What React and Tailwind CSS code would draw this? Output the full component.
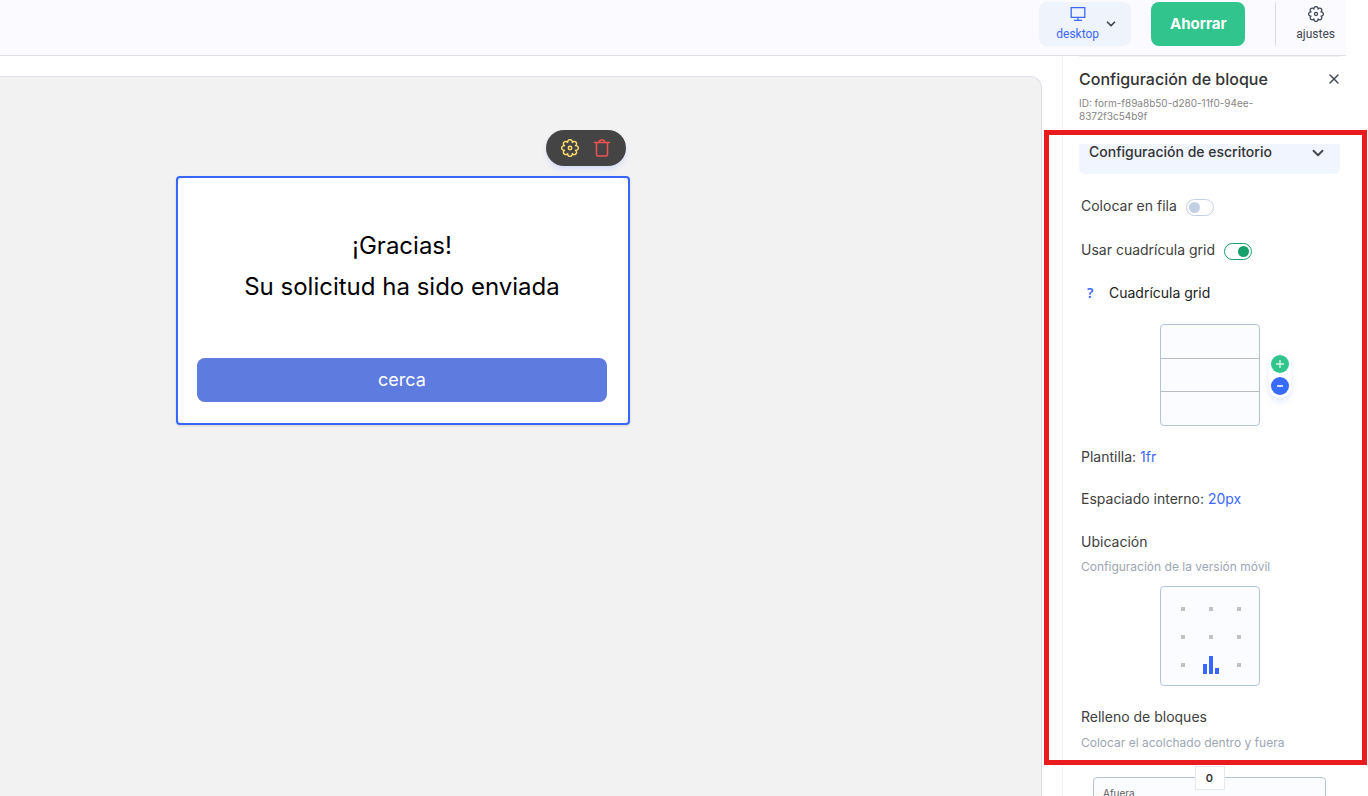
import React, { useState } from "react";
import { ChevronDown, X } from "lucide-react";

const GearIcon = ({ className }) => (
  <svg
    viewBox="0 0 24 24"
    fill="none"
    stroke="currentColor"
    strokeWidth="1.9"
    strokeLinejoin="round"
    className={className}
    aria-hidden="true"
  >
    <path d="M8.94 4.61A3.12 3.12 0 1 1 15.06 4.61A3.12 3.12 0 1 1 19.39 8.94A3.12 3.12 0 1 1 19.39 15.06A3.12 3.12 0 1 1 15.06 19.39A3.12 3.12 0 1 1 8.94 19.39A3.12 3.12 0 1 1 4.61 15.06A3.12 3.12 0 1 1 4.61 8.94A3.12 3.12 0 1 1 8.94 4.61z" />
    <circle cx="12" cy="12" r="2.3" />
  </svg>
);

const DesktopIcon = () => (
  <svg
    viewBox="0 0 16 16"
    fill="none"
    stroke="currentColor"
    strokeWidth="1.3"
    className="size-4"
    aria-hidden="true"
  >
    <path d="M1.2 1.6h13.6v9.8H1.2zM8 11.4v3M4 14.4h8" />
  </svg>
);

const TrashIcon = () => (
  <svg
    viewBox="0 0 18 18"
    fill="none"
    stroke="currentColor"
    strokeWidth="1.5"
    strokeLinecap="round"
    strokeLinejoin="round"
    className="size-[18px]"
    aria-hidden="true"
  >
    <path d="M1.5 3.5h15M3.5 3.5v12q0 1.5 1.5 1.5h8q1.5 0 1.5-1.5v-12M6.2 3.2q.2-2.2 2-2.2h1.6q1.8 0 2 2.2" />
  </svg>
);

const Header = () => {
  return (
    <header className="flex h-14 items-start justify-end border-b border-[#dfdfe8] bg-[#fafaff] pt-[2px] pr-[11px]">
      <button
        type="button"
        className="flex h-11 w-[92px] items-center gap-[5px] rounded-lg bg-[#eff3fb] pl-[17px] font-['Roboto',sans-serif] text-xs text-[#3d67ff]"
      >
        <span className="flex flex-col items-center gap-1">
          <DesktopIcon />
          desktop
        </span>
        <ChevronDown size={14} strokeWidth={3} className="text-[#3f4654]" />
      </button>
      <button
        type="button"
        className="ml-5 h-11 w-[94px] rounded-lg bg-[#31c48d] text-[15px] font-bold text-white"
      >
        Ahorrar
      </button>
      <div className="ml-[30px] flex h-11 border-l border-[#dcdce4] pl-5">
        <button
          type="button"
          className="flex flex-col items-center justify-center gap-1 font-['Roboto',sans-serif] text-xs text-[#3f4654]"
        >
          <GearIcon className="size-4" />
          ajustes
        </button>
      </div>
    </header>
  );
};

const FormBlock = () => {
  return (
    <div className="flex w-[454px] flex-col items-end">
      <div className="mr-1 flex h-9 w-20 items-center justify-center gap-[14px] rounded-full bg-[#444444] shadow-md shadow-indigo-200/60">
        <button type="button" aria-label="Ajustes" className="text-[#ffdc6b]">
          <GearIcon className="size-[18px]" />
        </button>
        <button type="button" aria-label="Eliminar" className="text-[#f05252]">
          <TrashIcon />
        </button>
      </div>
      <div className="mt-[10px] w-full rounded border-2 border-[#3867ff] bg-[#f2f2f2] shadow-sm">
        <div className="rounded-lg bg-white pt-[47px] pr-[21px] pb-[21px] pl-[19px]">
          <p className="text-center text-2xl leading-[41px] text-black">
            ¡Gracias!
            <br />
            Su solicitud ha sido enviada
          </p>
          <button
            type="button"
            className="mt-[51px] h-11 w-full rounded-lg bg-[#5e7bdf] text-lg text-white"
          >
            cerca
          </button>
        </div>
      </div>
    </div>
  );
};

const Switch = ({ id, label, checked, onChange }) => {
  return (
    <div className="flex h-5 items-center gap-[9px]">
      <label htmlFor={id}>{label}</label>
      <input
        type="checkbox"
        role="switch"
        id={id}
        checked={checked}
        onChange={onChange}
        className="mt-[2px] flex h-[17px] w-7 appearance-none items-center rounded-full border border-[#c3cfe2] bg-white px-[2px] before:size-[11px] before:rounded-full before:bg-[#c3d0e4] checked:justify-end checked:border-[#16a06c] checked:before:bg-[#16a06c]"
      />
    </div>
  );
};

const GridPreview = ({ rows, setRows }) => {
  return (
    <div className="relative mx-auto mt-[21px] h-[102px] w-[100px]">
      <div className="flex h-full flex-col divide-y divide-[#b8bcc6] rounded border border-[#b4c3dc] bg-[#fbfcff]">
        {Array.from({ length: rows }).map((_, i) => (
          <div key={i} className="flex-1" />
        ))}
      </div>
      <div className="absolute top-7 left-[109px] flex flex-col gap-1 rounded-full bg-white px-[2px] py-[3px] shadow-md shadow-indigo-100">
        <button
          type="button"
          aria-label="Añadir fila"
          onClick={() => setRows(rows + 1)}
          className="flex size-[18px] items-center justify-center rounded-full bg-[#31c48d] text-white/80"
        >
          <svg viewBox="0 0 10 10" className="size-[10px]" stroke="currentColor">
            <path d="M1 5h8M5 1v8" strokeWidth="1.4" />
          </svg>
        </button>
        <button
          type="button"
          aria-label="Quitar fila"
          onClick={() => setRows(Math.max(1, rows - 1))}
          className="flex size-[18px] items-center justify-center rounded-full bg-[#386bff] text-white/80"
        >
          <svg viewBox="0 0 10 10" className="size-[10px]" stroke="currentColor">
            <path d="M2 5h6" strokeWidth="2" />
          </svg>
        </button>
      </div>
    </div>
  );
};

const PositionPicker = () => {
  const [position, setPosition] = useState(7);

  return (
    <div className="mx-auto mt-[11px] grid size-[100px] grid-cols-[repeat(3,28px)] grid-rows-[repeat(3,28px)] rounded border border-[#b4c3dc] bg-[#fbfcff] pt-2 pl-2">
      {Array.from({ length: 9 }).map((_, i) => (
        <button
          key={i}
          type="button"
          aria-label={`Posición ${i + 1}`}
          onClick={() => setPosition(i)}
          className="flex items-center justify-center"
        >
          {position === i ? (
            <span className="flex items-end gap-[2px]">
              <span className="h-[10px] w-1 bg-[#3867ff]" />
              <span className="h-[18px] w-1 bg-[#3867ff]" />
              <span className="h-[6px] w-1 bg-[#3867ff]" />
            </span>
          ) : (
            <span className="size-1 bg-[#c2c2c2]" />
          )}
        </button>
      ))}
    </div>
  );
};

const SettingsPanel = () => {
  const [inRow, setInRow] = useState(false);
  const [useGrid, setUseGrid] = useState(true);
  const [rows, setRows] = useState(3);

  return (
    <aside className="flex w-[284px] shrink-0 flex-col border-l border-[#f0f0f5] pr-[6px] pl-4 text-sm text-[#404040]">
      <div className="h-[88px] shrink-0 border-t border-[#f0f0f5] pt-[10px]">
        <div className="flex items-center justify-between">
          <h2 className="text-base font-medium text-[#333333]">
            Configuración de bloque
          </h2>
          <button type="button" aria-label="Cerrar" className="-mr-[2px]">
            <X size={16} strokeWidth={2} className="text-[#3f4654]" />
          </button>
        </div>
        <p className="mt-[6px] w-[190px] text-[10px] leading-[13px] text-[#858585]">
          ID: form-f89a8b50-d280-11f0-94ee-8372f3c54b9f
        </p>
      </div>

      <div className="min-h-0 flex-1 overflow-hidden">
        <button
          type="button"
          className="flex h-[30px] w-full items-start justify-between rounded-b-md bg-[#f1f5ff] pr-[13px] pl-[10px] leading-4 font-medium text-[#333333]"
        >
          Configuración de escritorio
          <ChevronDown size={18} strokeWidth={2.5} className="text-[#3f4654]" />
        </button>

        <div className="px-[2px]">
          <div className="mt-[22px] flex flex-col gap-6">
            <Switch
              id="in-row"
              label="Colocar en fila"
              checked={inRow}
              onChange={(e) => setInRow(e.target.checked)}
            />
            <Switch
              id="use-grid"
              label="Usar cuadrícula grid"
              checked={useGrid}
              onChange={(e) => setUseGrid(e.target.checked)}
            />
          </div>

          <div className="mt-[23px] flex h-5 items-center text-[#222222]">
            <button
              type="button"
              aria-label="Ayuda"
              className="w-7 pl-[6px] text-left font-['Noto_Sans',sans-serif] text-sm font-semibold text-[#3d67ff]"
            >
              ?
            </button>
            Cuadrícula grid
          </div>
          <GridPreview rows={rows} setRows={setRows} />

          <p className="mt-[21px]">
            Plantilla:{" "}
            <a href="#plantilla" className="text-[#3d67ff]">
              1fr
            </a>
          </p>
          <p className="mt-[22px]">
            Espaciado interno:{" "}
            <a href="#espaciado" className="text-[#3d67ff]">
              20px
            </a>
          </p>

          <h3 className="mt-[23px]">Ubicación</h3>
          <p className="mt-[7px] text-xs text-[#9ca6b5]">
            Configuración de la versión móvil
          </p>
          <PositionPicker />

          <h3 className="mt-[21px]">Relleno de bloques</h3>
          <p className="mt-2 text-xs text-[#9ca6b5]">
            Colocar el acolchado dentro y fuera
          </p>
          <div className="relative mx-3 mt-[26px] h-40 rounded border border-[#b4c3dc] bg-[#fbfcff] px-[9px] pt-2 text-[10px] text-[#606060]">
            Afuera
            <input
              type="text"
              aria-label="Margen superior"
              defaultValue="0"
              className="absolute -top-3 left-1/2 h-6 w-[30px] -translate-x-1/2 border border-[#e6e8f0] bg-white text-center text-[11px] font-semibold text-[#333333]"
            />
          </div>
        </div>
      </div>
    </aside>
  );
};

const App = () => {
  return (
    <div className="relative h-screen overflow-hidden bg-white pr-[22px] font-['Inter',sans-serif]">
      <div className="flex h-full flex-col">
        <Header />
        <div className="flex min-h-0 flex-1">
          <main className="min-w-0 flex-1 pt-5 pr-5">
            <div className="h-full rounded-tr-xl border-t border-r border-[#dfdfeb] bg-[#f2f2f2] pt-[53px] pl-44">
              <FormBlock />
            </div>
          </main>
          <SettingsPanel />
        </div>
      </div>
      {/* highlight around the block settings */}
      <div className="pointer-events-none absolute top-[130px] right-px h-[635px] w-[323px] border-5 border-[#e81c1e]" />
    </div>
  );
};

export default App;
